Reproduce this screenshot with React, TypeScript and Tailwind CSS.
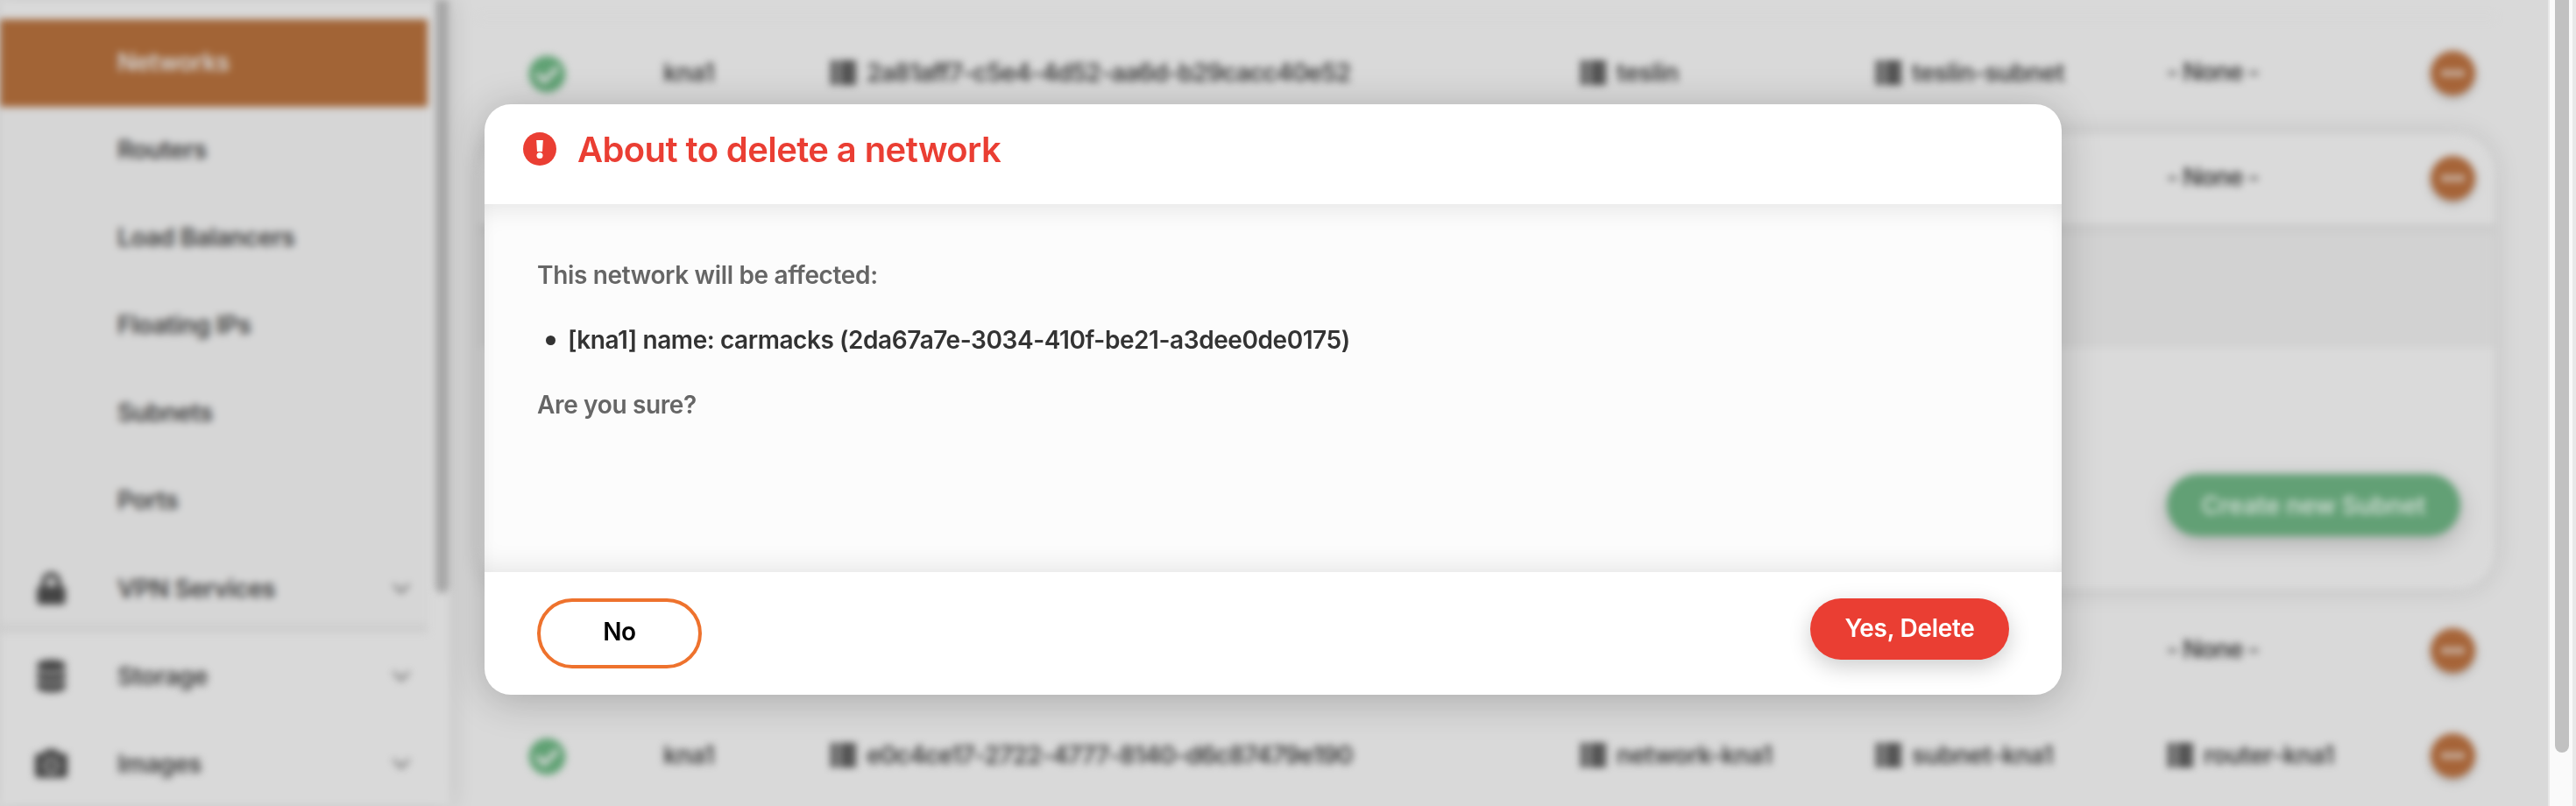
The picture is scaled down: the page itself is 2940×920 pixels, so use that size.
import { FaLock, FaDatabase, FaCamera, FaCheckCircle } from "react-icons/fa";
import type { IconType } from "react-icons";

const subItems = ["Networks", "Routers", "Load Balancers", "Floating IPs", "Subnets", "Ports"];

function Chevron() {
  return (
    <svg viewBox="0 0 22 14" className="h-[14px] w-[22px]" fill="none" stroke="#6a6a6a" strokeWidth="2.8">
      <path d="M2 2l9 9 9-9" />
    </svg>
  );
}

function SideGroup({ icon: Icon, label }: { icon: IconType; label: string }) {
  return (
    <div className="flex h-[100px] items-center pr-[19px] pb-[1px]">
      <div className="flex w-[116px] justify-center">
        <Icon className="size-[37px] text-[#444]" />
      </div>
      <span className="ml-[18px] grow">{label}</span>
      <Chevron />
    </div>
  );
}

function Sidebar() {
  return (
    <aside className="flex h-[920px] w-[514px] shrink-0 text-[28px] font-semibold tracking-[-0.4px] text-[#3c3c3c] shadow-[0_0_26px_rgba(0,0,0,0.13)]">
      <nav className="w-[488px]">
        <div className="h-[22px]" />
        <div className="bg-[#d6d6d6] shadow-[inset_0_-12px_12px_-6px_rgba(0,0,0,0.06)]">
          {subItems.map((item, i) => (
            <div
              key={item}
              className={
                i === 0
                  ? "flex h-[100px] items-center bg-[#a26436] pb-[2px] pl-[134px] text-[#d6d6d6]"
                  : "flex h-[100px] items-center pb-[2px] pl-[134px]"
              }
            >
              {item}
            </div>
          ))}
          <SideGroup icon={FaLock} label="VPN Services" />
        </div>
        <SideGroup icon={FaDatabase} label="Storage" />
        <SideGroup icon={FaCamera} label="Images" />
      </nav>
      <div className="ml-[9px] h-[677px] w-[15px] rounded-b-full bg-[#a6a6a6]" />
    </aside>
  );
}

function ListIcon() {
  return (
    <svg viewBox="0 0 30 28" className="ml-[1px] h-[28px] w-[29px] shrink-0" fill="#3c3c3c">
      <path d="M0 0h8v8.400H0zM0 9.800h8v8.400H0zM0 19.600h8V28H0zM10.500 0H30v8.400H10.500zM10.500 9.800H30v8.400H10.500zM10.500 19.600H30V28H10.500z" />
    </svg>
  );
}

function Linked({ text, className = "" }: { text: string; className?: string }) {
  return (
    <span className={"flex items-center gap-[12px] " + className}>
      <ListIcon />
      {text}
    </span>
  );
}

function MoreButton() {
  return (
    <span className="flex size-[51px] items-center justify-center gap-[2px] rounded-full bg-[#a66438] shadow-[0_4px_10px_rgba(0,0,0,0.2)]">
      <i className="size-[7px] rounded-full bg-[#d9d9d9]" />
      <i className="size-[7px] rounded-full bg-[#d9d9d9]" />
      <i className="size-[7px] rounded-full bg-[#d9d9d9]" />
    </span>
  );
}

type Network = { region: string; id: string; name: string; subnet: string };

function Row({ network, router, className }: { network?: Network; router?: string; className: string }) {
  return (
    <div
      className={
        "grid grid-cols-[154px_190px_856px_337px_333px_301px_51px] items-center pl-[56px] text-[28px] font-semibold tracking-[-0.45px] text-[#3c3c3c] " +
        className
      }
    >
      {network && (
        <>
          <FaCheckCircle className="mt-[2px] size-[43px] text-[#5fa173]" />
          <span>{network.region}</span>
          <Linked text={network.id} className="tracking-[-0.85px]" />
          <Linked text={network.name} />
          <Linked text={network.subnet} />
        </>
      )}
      {router ? (
        <Linked text={router} className="col-start-6" />
      ) : (
        <span className="col-start-6 -mt-[2px] tracking-[-0.9px]">- None -</span>
      )}
      <MoreButton />
    </div>
  );
}

function NetworksTable() {
  return (
    <main className="h-[920px] grow pt-[17px] pl-[33px]">
      <div className="h-[6px] w-[2300px] bg-[#d7d7d7]" />
      <Row
        className="h-[120px]"
        network={{ region: "kna1", id: "2a81aff7-c5e4-4d52-aa6d-b29cacc40e52", name: "teslin", subnet: "teslin-subnet" }}
      />
      <section className="mt-[10px] mb-[10px] h-[519px] w-[2300px] overflow-clip rounded-[44px] shadow-[0_0_30px_rgba(0,0,0,0.12)]">
        <Row className="h-[103px] bg-[#dadada] pb-[3px]" />
        <div className="h-[141px] bg-[#d2d2d2] shadow-[inset_0_14px_14px_-10px_rgba(0,0,0,0.06)]" />
        <div className="flex h-[275px] justify-end bg-[#dadada] pt-[144px] pr-[39px]">
          <span className="flex h-[71px] w-[335px] items-center justify-center rounded-full bg-[#62a075] text-[28px] font-semibold tracking-[-0.1px] text-[#cfdcd3] shadow-[0_8px_26px_rgba(0,0,0,0.2)]">
            Create new Subnet
          </span>
        </div>
      </section>
      <Row className="h-[120px]" />
      <Row
        className="h-[120px]"
        router="router-kna1"
        network={{ region: "kna1", id: "e0c4ce17-2722-4777-8140-d6c87479e190", name: "network-kna1", subnet: "subnet-kna1" }}
      />
    </main>
  );
}

function DeleteDialog() {
  return (
    <div
      role="dialog"
      className="absolute top-[119px] left-[553px] flex h-[674px] w-[1800px] flex-col overflow-hidden rounded-[30px] bg-white shadow-[0_6px_46px_rgba(0,0,0,0.22)]"
    >
      <header className="flex h-[114px] items-center gap-[24px] pb-[12px] pl-[44px] text-[#ea3e33]">
        <svg viewBox="0 0 38 38" className="size-[38px]">
          <circle cx="19" cy="19" r="19" fill="#ea3e33" />
          <path d="M15.200 9h7.600l-.8 13h-6z" fill="#fff" />
          <circle cx="19" cy="26.600" r="3.500" fill="#fff" />
        </svg>
        <h2 className="pt-[2px] text-[40px] leading-[48px] font-semibold tracking-[-0.6px]">About to delete a network</h2>
      </header>
      <div className="h-[420px] bg-[#fcfcfc] px-[60px] pt-[63px] text-[28px] leading-[37px] font-semibold tracking-[-0.35px] text-[#666] shadow-[inset_0_20px_30px_-16px_rgba(0,0,0,0.1),inset_0_-20px_30px_-16px_rgba(0,0,0,0.1)]">
        <p>This network will be affected:</p>
        <ul className="my-[37px] flex items-center pl-[10px] text-[#333]">
          <li className="flex items-center gap-[14px]">
            <i className="size-[11px] rounded-full bg-[#333]" />
            <span className="tracking-[-0.43px]">[kna1] name: carmacks (2da67a7e-3034-410f-be21-a3dee0de0175)</span>
          </li>
        </ul>
        <p>Are you sure?</p>
      </div>
      <footer className="flex h-[140px] items-start justify-between px-[60px] pt-[30px] text-[28px]">
        <button className="h-[80px] w-[188px] rounded-full border-4 border-[#ee722d] pb-[4px] font-semibold tracking-[-0.5px] text-black">
          No
        </button>
        <button className="h-[70px] w-[227px] rounded-full bg-[#ea3e33] pb-[2px] font-semibold tracking-[-0.3px] text-white shadow-[0_8px_26px_rgba(0,0,0,0.2)]">
          Yes, Delete
        </button>
      </footer>
    </div>
  );
}

export default function App() {
  return (
    <div className="relative flex h-[920px] w-[2940px] overflow-hidden bg-[#d9d9d9] font-[Inter,sans-serif]">
      <div className="w-[2908px] overflow-hidden">
        <div className="flex h-[920px] blur-[4px]">
          <Sidebar />
          <NetworksTable />
        </div>
      </div>
      <div className="w-[32px] border-r-4 border-l-2 border-[#e8e8e8] bg-[#fafafa] pl-[6px]">
        <div className="h-[859px] w-[16px] rounded-b-full bg-[#c1c1c1]" />
      </div>
      <DeleteDialog />
    </div>
  );
}
